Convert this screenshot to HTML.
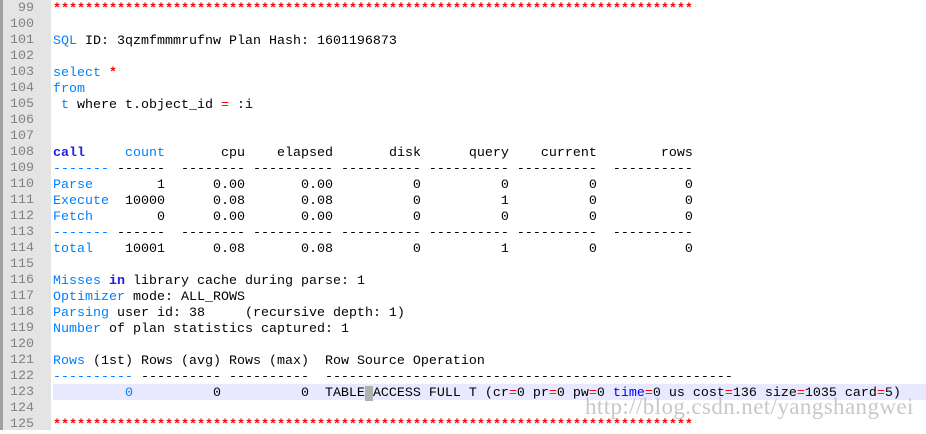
<!DOCTYPE html>
<html><head><meta charset="utf-8"><style>
body{margin:0;width:926px;height:430px;overflow:hidden;background:#fff;position:relative}
.g{position:absolute;left:0;top:0;width:51px;height:430px;background:#e4e4e4;border-left:3px solid #a0a0a0;box-sizing:border-box}
.l{position:absolute;left:0;height:16px;width:926px;font:13.33px/16px "Liberation Mono",monospace;white-space:pre;color:#000}
.n{position:absolute;top:1px;left:3px;width:31px;text-align:right;color:#808080}
.t{position:absolute;top:2px;left:53px}
.r{color:#ff0000}.b{color:#0080ff}.k{color:#2020e0;font-weight:bold}.bb{color:#0000ff}
.st{font-weight:bold}
.hl{position:absolute;left:53px;right:0;height:16px;background:#e8e8ff}
.wm{position:absolute;left:585px;top:394px;font:23px "Liberation Serif",serif;color:#c8c8c8;letter-spacing:0.4px}
.cur{background:#b0b0b0}
</style></head><body>
<div class="g"></div>
<div class="hl" style="top:384px"></div>
<div class="l" style="top:0"><span class="n">99</span><span class="t r st">********************************************************************************</span></div>
<div class="l" style="top:16px"><span class="n">100</span></div>
<div class="l" style="top:32px"><span class="n">101</span><span class="t"><span class="b">SQL</span> ID: 3qzmfmmmrufnw Plan Hash: 1601196873</span></div>
<div class="l" style="top:48px"><span class="n">102</span></div>
<div class="l" style="top:64px"><span class="n">103</span><span class="t"><span class="b">select</span> <span class="r st">*</span></span></div>
<div class="l" style="top:80px"><span class="n">104</span><span class="t b">from</span></div>
<div class="l" style="top:96px"><span class="n">105</span><span class="t"> <span class="b">t</span> where t.object_id <span class="r">=</span> :i</span></div>
<div class="l" style="top:112px"><span class="n">106</span></div>
<div class="l" style="top:128px"><span class="n">107</span></div>
<div class="l" style="top:144px"><span class="n">108</span><span class="t"><span class="k">call</span>     <span class="b">count</span>       cpu    elapsed       disk      query    current        rows</span></div>
<div class="l" style="top:160px"><span class="n">109</span><span class="t"><span class="b">-------</span> ------  -------- ---------- ---------- ---------- ----------  ----------</span></div>
<div class="l" style="top:176px"><span class="n">110</span><span class="t"><span class="b">Parse</span>        1      0.00       0.00          0          0          0           0</span></div>
<div class="l" style="top:192px"><span class="n">111</span><span class="t"><span class="b">Execute</span>  10000      0.08       0.08          0          1          0           0</span></div>
<div class="l" style="top:208px"><span class="n">112</span><span class="t"><span class="b">Fetch</span>        0      0.00       0.00          0          0          0           0</span></div>
<div class="l" style="top:224px"><span class="n">113</span><span class="t"><span class="b">-------</span> ------  -------- ---------- ---------- ---------- ----------  ----------</span></div>
<div class="l" style="top:240px"><span class="n">114</span><span class="t"><span class="b">total</span>    10001      0.08       0.08          0          1          0           0</span></div>
<div class="l" style="top:256px"><span class="n">115</span></div>
<div class="l" style="top:272px"><span class="n">116</span><span class="t"><span class="b">Misses</span> <span class="k">in</span> library cache during parse: 1</span></div>
<div class="l" style="top:288px"><span class="n">117</span><span class="t"><span class="b">Optimizer</span> mode: ALL_ROWS</span></div>
<div class="l" style="top:304px"><span class="n">118</span><span class="t"><span class="b">Parsing</span> user id: 38     (recursive depth: 1)</span></div>
<div class="l" style="top:320px"><span class="n">119</span><span class="t"><span class="b">Number</span> of plan statistics captured: 1</span></div>
<div class="l" style="top:336px"><span class="n">120</span></div>
<div class="l" style="top:352px"><span class="n">121</span><span class="t"><span class="b">Rows</span> (1st) Rows (avg) Rows (max)  Row Source Operation</span></div>
<div class="l" style="top:368px"><span class="n">122</span><span class="t"><span class="b">----------</span> ---------- ----------  ---------------------------------------------------</span></div>
<div class="l" style="top:384px"><span class="n">123</span><span class="t">         <span class="b">0</span>          0          0  TABLE<span class="cur"> </span>ACCESS FULL T (cr<span class="r">=</span>0 pr<span class="r">=</span>0 pw<span class="r">=</span>0 <span class="bb">time</span><span class="r">=</span>0 us cost<span class="r">=</span>136 size<span class="r">=</span>1035 card<span class="r">=</span>5)</span></div>
<div class="l" style="top:400px"><span class="n">124</span></div>
<div class="l" style="top:416px"><span class="n">125</span><span class="t r st">********************************************************************************</span></div>
<div class="wm">http://blog.csdn.net/yangshangwei</div>
</body></html>
